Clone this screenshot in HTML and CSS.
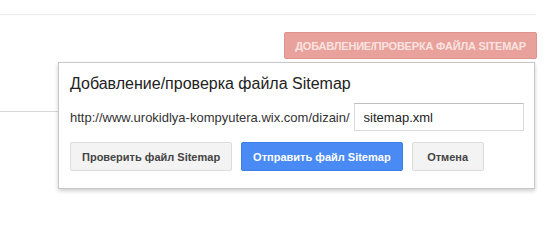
FILE: index.html
```html
<!DOCTYPE html>
<html lang="ru">

<head>
    <meta charset="UTF-8">
    <title>Файлы Sitemap</title>
    <link rel="stylesheet" href="styles.css">
</head>

<body>
    <div class="page">
        <div class="topbar"></div>
        <div class="actions">
            <button class="add-btn">Добавление/проверка файла Sitemap</button>
        </div>

        <div class="content">
            <div class="divider"></div>

            <!-- окно добавления файла -->
            <div class="dialog">
                <div class="dialog-title">Добавление/проверка файла Sitemap</div>
                <div class="url-row">
                    <span class="url-prefix">http://www.urokidlya-kompyutera.wix.com/dizain/</span>
                    <input type="text" class="url-input" value="sitemap.xml">
                </div>
                <div class="dialog-buttons">
                    <button class="btn">Проверить файл Sitemap</button>
                    <button class="btn btn-blue">Отправить файл Sitemap</button>
                    <button class="btn btn-cancel">Отмена</button>
                </div>
            </div>
        </div>
    </div>
</body>

</html>
```

FILE: styles.css
```css
body {
    margin: 0;
    font-family: Arial, "Liberation Sans", sans-serif;
    background-color: #fff;
    color: #222;
}

.page {
    width: 537px;
    min-height: 248px;
}

.topbar {
    width: 536px;
    height: 14px;
    border-bottom: 1px solid #ebebeb;
}

.actions {
    display: flex;
    justify-content: flex-end;
    margin-top: 17px;
}

.add-btn {
    height: 27px;
    padding: 0 10px;
    border: 1px solid #e0938d;
    border-radius: 2px;
    background-color: #e9a19b;
    color: #fae3e1;
    font-family: inherit;
    font-size: 11px;
    font-weight: bold;
    letter-spacing: -0.2px;
    text-transform: uppercase;
    cursor: pointer;
}

.content {
    display: flex;
    align-items: flex-start;
    margin-top: 3px;
}

.divider {
    width: 58px;
    flex-shrink: 0;
    margin-top: 49px;
    border-top: 1px solid #d8d8d8;
}

.dialog {
    width: 453px;
    padding: 11px 11px 17px 11px;
    border: 1px solid #c8c8c8;
    background-color: #fff;
    box-shadow: 0 2px 4px rgba(0, 0, 0, 0.2);
}

.dialog-title {
    font-size: 16px;
    line-height: 19px;
    color: #222;
    margin-bottom: 10px;
}

.url-row {
    display: flex;
    align-items: center;
    gap: 4px;
}

.url-prefix {
    flex-shrink: 0;
    white-space: nowrap;
    font-size: 13px;
    color: #333;
}

.url-input {
    width: 150px;
    height: 26px;
    padding: 0 9px;
    border: 1px solid #d9d9d9;
    border-top-color: #c0c0c0;
    font-family: inherit;
    font-size: 13px;
    color: #222;
    margin-left: auto;
}

.dialog-buttons {
    display: flex;
    gap: 9px;
    margin-top: 11px;
}

.btn {
    height: 29px;
    padding: 0 11px;
    border: 1px solid #dcdcdc;
    border-radius: 2px;
    background-color: #f3f3f3;
    color: #444;
    font-family: inherit;
    font-size: 11px;
    font-weight: bold;
    cursor: pointer;
}

.btn-blue {
    background-color: #4a8af4;
    border-color: #3d7de8;
    color: #fff;
}

.btn-cancel {
    width: 72px;
}
```
